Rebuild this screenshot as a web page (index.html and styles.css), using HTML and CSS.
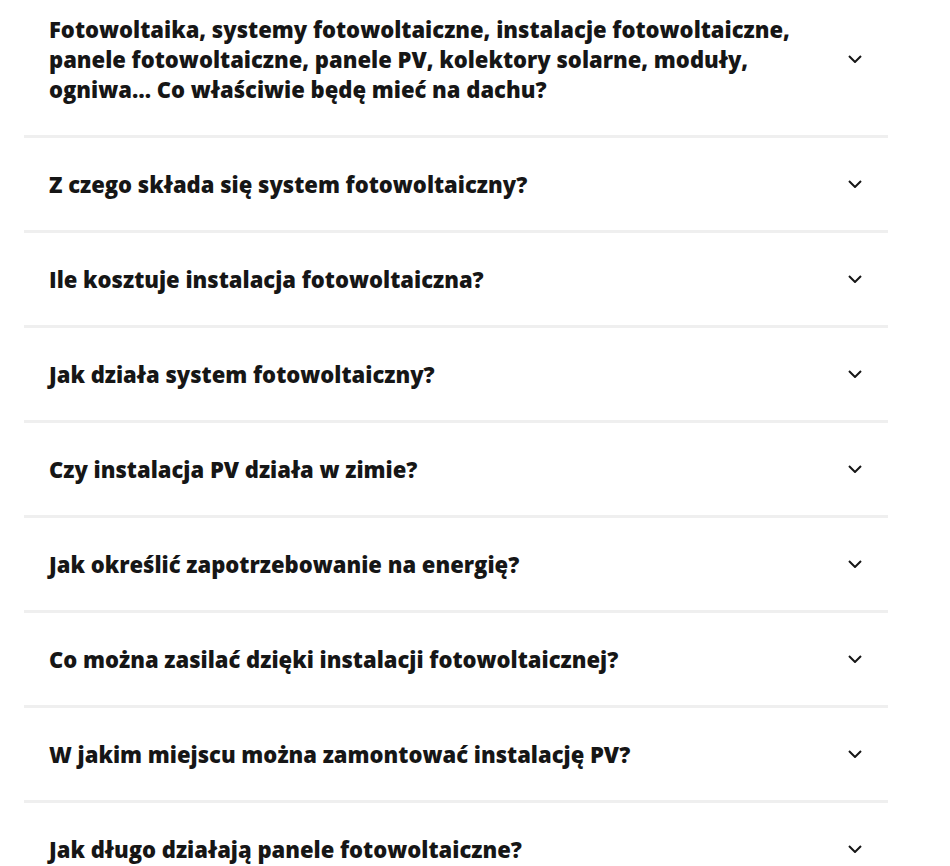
FILE: index.html
```html
<!DOCTYPE html>
<html lang="pl">
<head>
<meta charset="utf-8">
<title>FAQ – fotowoltaika</title>
<link rel="stylesheet" href="styles.css">
</head>
<body>
<section class="faq">
  <div class="faq-item">
    <span class="faq-q">Fotowoltaika, systemy fotowoltaiczne, instalacje fotowoltaiczne, panele fotowoltaiczne, panele PV, kolektory solarne, moduły, ogniwa… Co właściwie będę mieć na dachu?</span>
    <svg class="chev" viewBox="0 0 14 8"><path d="M1 1l6 6 6-6"/></svg>
  </div>
  <div class="faq-item">
    <span class="faq-q">Z czego składa się system fotowoltaiczny?</span>
    <svg class="chev" viewBox="0 0 14 8"><path d="M1 1l6 6 6-6"/></svg>
  </div>
  <div class="faq-item">
    <span class="faq-q">Ile kosztuje instalacja fotowoltaiczna?</span>
    <svg class="chev" viewBox="0 0 14 8"><path d="M1 1l6 6 6-6"/></svg>
  </div>
  <div class="faq-item">
    <span class="faq-q">Jak działa system fotowoltaiczny?</span>
    <svg class="chev" viewBox="0 0 14 8"><path d="M1 1l6 6 6-6"/></svg>
  </div>
  <div class="faq-item">
    <span class="faq-q">Czy instalacja PV działa w zimie?</span>
    <svg class="chev" viewBox="0 0 14 8"><path d="M1 1l6 6 6-6"/></svg>
  </div>
  <div class="faq-item">
    <span class="faq-q">Jak określić zapotrzebowanie na energię?</span>
    <svg class="chev" viewBox="0 0 14 8"><path d="M1 1l6 6 6-6"/></svg>
  </div>
  <div class="faq-item">
    <span class="faq-q">Co można zasilać dzięki instalacji fotowoltaicznej?</span>
    <svg class="chev" viewBox="0 0 14 8"><path d="M1 1l6 6 6-6"/></svg>
  </div>
  <div class="faq-item">
    <span class="faq-q">W jakim miejscu można zamontować instalację PV?</span>
    <svg class="chev" viewBox="0 0 14 8"><path d="M1 1l6 6 6-6"/></svg>
  </div>
  <div class="faq-item">
    <span class="faq-q">Jak długo działają panele fotowoltaiczne?</span>
    <svg class="chev" viewBox="0 0 14 8"><path d="M1 1l6 6 6-6"/></svg>
  </div>
</section>
</body>
</html>
```
FILE: styles.css
```css
html, body {
  margin: 0;
  background: #fff;
}

body {
  font-family: "Open Sans", "Noto Sans", sans-serif;
  color: #161616;
}

.faq {
  width: 864px;
  margin: -17px 0 0 24px;
}

.faq-item {
  display: flex;
  align-items: center;
  gap: 40px;
  padding: 31px 26px 31px 25px;
  border-bottom: 3px solid #efefef;
}

.faq-q {
  flex: 1;
  font-size: 22px;
  font-weight: 800;
  line-height: 30px;
}

.chev {
  flex: none;
  width: 14px;
  height: 8px;
  fill: none;
  stroke: #161616;
  stroke-width: 2;
}
```
